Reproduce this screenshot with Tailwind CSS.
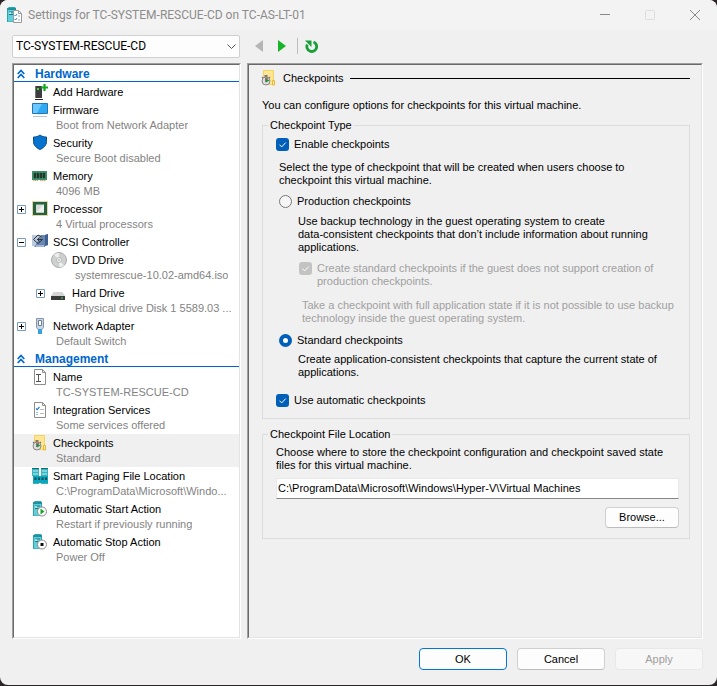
<!DOCTYPE html>
<html lang="en">
<head>
	<meta charset="UTF-8">
	<meta name="viewport" content="width=device-width, initial-scale=1.0">
	<title>Settings for TC-SYSTEM-RESCUE-CD on TC-AS-LT-01</title>
	<script src="https://cdn.jsdelivr.net/npm/@tailwindcss/browser@4"></script>
</head>
<body class="bg-[#2b2528] font-['Liberation_Sans',Arial,sans-serif] text-[11px] leading-[13px] text-black">

	<!-- shared icons -->
	<svg class="hidden">
		<symbol id="check" viewBox="0 0 13 13"><path d="M3.500 6.700l2.200 2.200 4-4.300" fill="none" stroke="#fff"/></symbol>
		<symbol id="collapse" viewBox="0 0 8 10"><path d="M.7 5L4 1.500 7.300 5M.7 9L4 5.500 7.300 9" fill="none" stroke="#0066cc" stroke-width="1.700"/></symbol>
		<symbol id="plus" viewBox="0 0 9 9"><path d="M.5.5h8v8h-8z" fill="#fff" stroke="#7a9ac0"/><path d="M2 4.500h5M4.500 2v5" stroke="#000"/></symbol>
		<symbol id="minus" viewBox="0 0 9 9"><path d="M.5.5h8v8h-8z" fill="#fff" stroke="#7a9ac0"/><path d="M2 4.500h5" stroke="#000"/></symbol>
		<symbol id="checkpoint" viewBox="0 0 16 16">
			<path d="M2 0h11v15H2z" fill="#ffe694"/><path d="M2.500 .5h10v14h-10z" fill="none" stroke="#f5d35e"/>
			<path d="M11.500 10.500h2v4.500h-2z" fill="#ffe694" stroke="#e9b93a"/>
			<path d="M3.500 5h3v2h-3z" fill="#777"/><path d="M1 7l1 1M9 7L8 8" stroke="#777" stroke-width="1.300"/>
			<circle cx="5" cy="11" r="4" fill="#dedede" stroke="#888"/>
			<path d="M4.500 8v4" stroke="#777"/><path d="M5 8.500l3.500 2L5 12.500z" fill="#1c9a38"/><path d="M5 8l2 1" stroke="#d33"/>
		</symbol>
		<symbol id="tower" viewBox="0 0 16 16">
			<path d="M1 1.500L3 0h6l1 1.500V15H1z" fill="#2aa5b2"/><path d="M2 3h7v11.500H2z" fill="#5fd0da"/>
			<path d="M1 2h9" stroke="#147f8b"/><path d="M3 5h5M3 7.500h5" stroke="#167a86"/><path d="M3 6h2" stroke="#fff"/>
		</symbol>
	</svg>

	<div class="flex min-h-[calc(100vh-1px)] flex-col rounded-lg bg-[#f0f0f0]">

		<header class="flex h-[30px] items-center rounded-t-lg bg-[#f3f3f3] pl-[6px]">
			<svg class="h-4 w-4" viewBox="0 0 16 16">
				<use href="#tower"/>
				<path d="M7.500 3.500h5l3 3v9h-8z" fill="#fff" stroke="#999"/><path d="M12.500 3.500v3h3" fill="none" stroke="#999"/>
				<path d="M8.500 8l1 1 1.500-2M8.500 12l1 1 1.500-2" fill="none" stroke="#2784ce"/><path d="M12 9h2M12 13h2" stroke="#aaa"/>
			</svg>
			<h1 class="ml-[6px] flex-1 font-['Roboto',sans-serif] text-xs text-[#8c8c8c]">Settings for TC-SYSTEM-RESCUE-CD on TC-AS-LT-01</h1>
			<button type="button" aria-label="Minimize" class="flex h-full w-[45px] items-center justify-center">
				<svg class="h-[10px] w-[10px]" viewBox="0 0 10 10"><path d="M0 4.500h10" stroke="#888"/></svg>
			</button>
			<button type="button" aria-label="Maximize" disabled class="flex h-full w-[45px] items-center justify-center">
				<svg class="h-[10px] w-[10px]" viewBox="0 0 10 10"><rect x=".5" y=".5" width="9" height="9" rx="1" fill="none" stroke="#ddd"/></svg>
			</button>
			<button type="button" aria-label="Close" class="flex h-full w-[45px] items-center justify-center">
				<svg class="h-[10px] w-[10px]" viewBox="0 0 10 10"><path d="M0 0l10 10M10 0L0 10" stroke="#888"/></svg>
			</button>
		</header>

		<div class="flex h-[33px] items-center pb-[1px] pl-3">
			<div class="relative w-[228px]">
				<select aria-label="Virtual machine" class="block h-[23px] w-full appearance-none rounded-xs border border-[#d0d0d0] bg-[#fdfdfd] pl-[3px] font-['Roboto',sans-serif] text-xs">
					<option>TC-SYSTEM-RESCUE-CD</option>
				</select>
				<svg class="pointer-events-none absolute top-[7px] right-1 h-[9px] w-[9px]" viewBox="0 0 9 9"><path d="M.5 2.500l4 4 4-4" fill="none" stroke="#555"/></svg>
			</div>
			<button type="button" aria-label="Previous" disabled class="ml-[14px]">
				<svg class="h-3 w-3" viewBox="0 0 12 12"><path d="M9 0v12L1 6z" fill="#b5b5b5"/></svg>
			</button>
			<button type="button" aria-label="Next" class="ml-[11px]">
				<svg class="h-3 w-3" viewBox="0 0 12 12"><path d="M1 0v12l8-6z" fill="#18b427"/></svg>
			</button>
			<span class="ml-2 h-4 border-l border-[#bcbcbc]"></span>
			<button type="button" aria-label="Revert" class="ml-[7px]">
				<svg class="h-[13px] w-[13px]" viewBox="0 0 13 13"><path d="M8.500 2a4.900 4.900 0 1 1-6.200 2.500" fill="none" stroke="#189f38" stroke-width="2.800"/><path d="M0 .5h6.500V7z" fill="#189f38"/></svg>
			</button>
		</div>

		<main class="flex flex-1 gap-[6px] pr-[14px] pl-3">

			<nav aria-label="Settings" class="flex w-[229px] shrink-0 border border-t-[#a0a0a0] border-r-white border-b-white border-l-[#a0a0a0]">
				<div class="w-full min-w-0 border border-t-[#696969] border-r-[#e3e3e3] border-b-[#e3e3e3] border-l-[#696969] bg-white">
					<h2 class="flex h-[17px] items-center gap-[10px] border-b border-[#0066cc] pt-[1px] pl-[3px] text-xs font-bold text-[#0066cc]">
						<svg class="h-[10px] w-2"><use href="#collapse"/></svg>Hardware
					</h2>
					<ul class="pt-[1px]">
						<li class="flex pl-[18px]">
							<a href="#" class="flex min-w-0 gap-[5px]">
								<svg class="mt-[1px] h-4 w-4 shrink-0" viewBox="0 0 16 16">
									<path d="M3 2h7v12H3z" fill="#3d3d3d"/><path d="M3 2h1v12H3z" fill="#777"/><path d="M3 15.500h8" stroke="#222"/><path d="M5 4h2v2H5z" fill="#3adf3a"/>
									<path d="M12.500 0v7M9 3.500h7" stroke="#13a81d" stroke-width="2.200"/>
								</svg>
								<span class="leading-[18px]">Add Hardware</span>
							</a>
						</li>
						<li class="flex pl-[18px]">
							<a href="#" class="flex min-w-0 gap-[5px]">
								<svg class="h-4 w-4 shrink-0" viewBox="0 0 16 16">
									<path d="M.5 2.500h15v10H.5z" fill="#2fa9f5" stroke="#2277b0"/><path d="M1 3h9L5 12H1z" fill="#6bc8ff"/><path d="M1 15.500h14" stroke="#b4c4d0"/><path d="M6 13h4v1H6z" fill="#e8eef2"/>
								</svg>
								<span class="min-w-0"><span class="block leading-[18px]">Firmware</span><span class="block truncate pb-[2px] pl-[3px] leading-[13px] text-[#838383]">Boot from Network Adapter</span></span>
							</a>
						</li>
						<li class="flex pl-[18px]">
							<a href="#" class="flex min-w-0 gap-[5px]">
								<svg class="h-4 w-4 shrink-0" viewBox="0 0 16 16">
									<path d="M8 1c2 1.500 4 2 6.500 2v4.500c0 4-3 6.500-6.500 8-3.500-1.500-6.500-4-6.500-8V3C4 3 6 2.500 8 1z" fill="#0673cf" stroke="#0a4d91"/>
								</svg>
								<span class="min-w-0"><span class="block leading-[18px]">Security</span><span class="block truncate pb-[2px] pl-[3px] leading-[13px] text-[#838383]">Secure Boot disabled</span></span>
							</a>
						</li>
						<li class="flex pl-[18px]">
							<a href="#" class="flex min-w-0 gap-[5px]">
								<svg class="h-4 w-4 shrink-0" viewBox="0 0 16 16">
									<path d="M0 4h15v9H0z" fill="#3f9068"/><path d="M2 6h2v5H2zM5 6h2v5H5zM8 6h2v5H8zM11 6h2v5h-2z" fill="#26332d" stroke="#1d4634" stroke-width=".5"/><path d="M1 13.500h5M8 13.500h6" stroke="#e0a070" stroke-dasharray="1.500 .5"/>
								</svg>
								<span class="min-w-0"><span class="block leading-[18px]">Memory</span><span class="block truncate pb-[2px] pl-[3px] leading-[13px] text-[#838383]">4096 MB</span></span>
							</a>
						</li>
						<li class="flex pl-[3px]">
							<button type="button" aria-label="Expand Processor" class="mr-[6px] flex h-[18px] items-center"><svg class="h-[9px] w-[9px]"><use href="#plus"/></svg></button>
							<a href="#" class="flex min-w-0 gap-[5px]">
								<svg class="h-4 w-4 shrink-0" viewBox="0 0 16 16">
									<rect x=".5" y="1.500" width="15" height="14" fill="none" stroke="#c9a94c" stroke-dasharray="1 1"/><path d="M1 2h14v13H1z" fill="#24613f"/><path d="M4 4.500h8v8H4z" fill="#d8dcd9"/><path d="M4 12.500l8-8v8z" fill="#eef0ee"/>
								</svg>
								<span class="min-w-0"><span class="block leading-[18px]">Processor</span><span class="block truncate pb-[2px] pl-[3px] leading-[13px] text-[#838383]">4 Virtual processors</span></span>
							</a>
						</li>
						<li>
							<div class="flex pl-[3px]">
								<button type="button" aria-label="Collapse SCSI Controller" class="mr-[6px] flex h-[18px] items-center"><svg class="h-[9px] w-[9px]"><use href="#minus"/></svg></button>
								<a href="#" class="flex min-w-0 gap-[5px]">
									<svg class="h-4 w-4 shrink-0" viewBox="0 0 16 16">
										<path d="M0 2h13l3-1v11l-3 1v1H3l-1-1H0z" fill="#6787b3"/><path d="M0 2h9L3 13H0z" fill="#b9c9df"/><path d="M13 2l3-1v11l-3 1z" fill="#415f8e"/>
										<path d="M9.500 4L6 2 1.500 6.500 6 10.500l4.500-4H5M7.500 4.500l-2 2 2 2" fill="none" stroke="#333"/><path d="M4 13h8" stroke="#dce6f2"/>
									</svg>
									<span class="leading-[18px]">SCSI Controller</span>
								</a>
							</div>
							<ul>
								<li class="flex pl-[37px]">
									<a href="#" class="flex min-w-0 gap-[5px]">
										<svg class="mt-[1px] h-4 w-4 shrink-0" viewBox="0 0 16 16">
											<circle cx="8" cy="8" r="7.500" fill="#cdd0cf" stroke="#a9acab"/><path d="M8 8L3 2.500A7 7 0 0 1 8 1zM8 8l5 5.500A7 7 0 0 1 8 15z" fill="#eceeed"/><circle cx="8" cy="8" r="2.500" fill="#f3f4f4" stroke="#a9b0ae" stroke-width=".8"/><circle cx="8" cy="8" r="1" fill="#bbb"/>
										</svg>
										<span class="min-w-0"><span class="block leading-[18px]">DVD Drive</span><span class="block truncate pb-[2px] pl-[3px] leading-[13px] text-[#838383]">systemrescue-10.02-amd64.iso</span></span>
									</a>
								</li>
								<li class="flex pl-[22px]">
									<button type="button" aria-label="Expand Hard Drive" class="mr-[6px] flex h-[18px] shrink-0 items-center"><svg class="h-[9px] w-[9px]"><use href="#plus"/></svg></button>
									<a href="#" class="flex min-w-0 gap-[5px]">
										<svg class="mt-[1px] h-4 w-4 shrink-0" viewBox="0 0 16 16">
											<path d="M2.500 7h9l2.500 4H0z" fill="#d5d5d5"/><path d="M0 11h14v4H0z" fill="#3b3b3b"/><path d="M10 12.500h2v1h-2z" fill="#3de05a"/>
										</svg>
										<span class="min-w-0"><span class="block leading-[18px]">Hard Drive</span><span class="block truncate pb-[2px] pl-[3px] leading-[13px] text-[#838383]">Physical drive Disk 1 5589.03 ...</span></span>
									</a>
								</li>
							</ul>
						</li>
						<li class="flex pl-[3px]">
							<button type="button" aria-label="Expand Network Adapter" class="mr-[6px] flex h-[18px] items-center"><svg class="h-[9px] w-[9px]"><use href="#plus"/></svg></button>
							<a href="#" class="flex min-w-0 gap-[5px]">
								<svg class="mt-[1px] h-4 w-4 shrink-0" viewBox="0 0 16 16">
									<path d="M4.500 .5h7v9l-1.500 2H6l-1.500-2z" fill="#c9d5e2" stroke="#8397ad"/><path d="M6.500 2.500h3v5h-3z" fill="#fff" stroke="#6d8094"/><path d="M6 11h4v5H6z" fill="#35a3dd"/>
								</svg>
								<span class="min-w-0"><span class="block leading-[18px]">Network Adapter</span><span class="block truncate pb-[2px] pl-[3px] leading-[13px] text-[#838383]">Default Switch</span></span>
							</a>
						</li>
					</ul>
					<h2 class="flex h-[17px] items-center gap-[10px] border-b border-[#0066cc] pt-[1px] pl-[3px] text-xs font-bold text-[#0066cc]">
						<svg class="h-[10px] w-2"><use href="#collapse"/></svg>Management
					</h2>
					<ul class="pt-[1px]">
						<li class="flex pl-[18px]">
							<a href="#" class="flex min-w-0 gap-[5px]">
								<svg class="mt-[1px] h-4 w-4 shrink-0" viewBox="0 0 16 16">
									<path d="M2.500 .5h8l3 3v12h-11z" fill="#fff" stroke="#8d8d8d"/><path d="M10.500 .5v3h3" fill="none" stroke="#8d8d8d"/><path d="M4 5.500h5M4 12.500h5M6.500 5.500v7" stroke="#555"/>
								</svg>
								<span class="min-w-0"><span class="block leading-[18px]">Name</span><span class="block truncate pb-[2px] pl-[3px] leading-[13px] text-[#838383]">TC-SYSTEM-RESCUE-CD</span></span>
							</a>
						</li>
						<li class="flex pl-[18px]">
							<a href="#" class="flex min-w-0 gap-[5px]">
								<svg class="mt-[1px] h-4 w-4 shrink-0" viewBox="0 0 16 16">
									<path d="M2.500 .5h8l3 3v12h-11z" fill="#fff" stroke="#8d8d8d"/><path d="M10.500 .5v3h3" fill="none" stroke="#8d8d8d"/><path d="M4 6.500l1.200 1.200L7.500 5" fill="none" stroke="#2784ce" stroke-width="1.200"/><path d="M4 10.500h2M4 12.500h2" stroke="#9cc0de"/><path d="M8 7.500h4M8 11.500h4" stroke="#bbb"/>
								</svg>
								<span class="min-w-0"><span class="block leading-[18px]">Integration Services</span><span class="block truncate pb-[2px] pl-[3px] leading-[13px] text-[#838383]">Some services offered</span></span>
							</a>
						</li>
						<li class="flex bg-[#f0f0f0] pl-[18px]">
							<a href="#" aria-current="page" class="flex min-w-0 gap-[5px]">
								<svg class="mt-[1px] h-4 w-4 shrink-0"><use href="#checkpoint"/></svg>
								<span class="min-w-0"><span class="block leading-[18px]">Checkpoints</span><span class="block truncate pb-[2px] pl-[3px] leading-[13px] text-[#838383]">Standard</span></span>
							</a>
						</li>
						<li class="flex pl-[18px]">
							<a href="#" class="flex min-w-0 gap-[5px]">
								<svg class="mt-[1px] h-4 w-4 shrink-0" viewBox="0 0 16 16">
									<path d="M0 0h7v8H0zM9 0h7v8H9z" fill="#36b4c0"/><path d="M0 .5h7M9 .5h7" stroke="#0d6f7b"/><path d="M1 3h5M10 3h5M1 6h5M10 6h5" stroke="#c7f1f5"/>
									<path d="M1 8h15v7H1z" fill="#0ba7bf"/><path d="M2.500 9.500h2v2.500h-2zM6 9.500h2v2.500H6zM9.500 9.500h2v2.500h-2zM13 9.500h2v2.500h-2z" fill="#04505e"/><path d="M1 15.500h6M9 15.500h7" stroke="#36b4c0"/>
								</svg>
								<span class="min-w-0"><span class="block leading-[18px]">Smart Paging File Location</span><span class="block truncate pb-[2px] pl-[3px] leading-[13px] text-[#838383]">C:\ProgramData\Microsoft\Windo...</span></span>
							</a>
						</li>
						<li class="flex pl-[18px]">
							<a href="#" class="flex min-w-0 gap-[5px]">
								<svg class="mt-[1px] h-4 w-4 shrink-0" viewBox="0 0 16 16">
									<use href="#tower"/><circle cx="10" cy="10.500" r="4.500" fill="#fff" stroke="#8a8a8a"/><path d="M8.500 7.500v6l4-3z" fill="#18a52c"/>
								</svg>
								<span class="min-w-0"><span class="block leading-[18px]">Automatic Start Action</span><span class="block truncate pb-[2px] pl-[3px] leading-[13px] text-[#838383]">Restart if previously running</span></span>
							</a>
						</li>
						<li class="flex pl-[18px]">
							<a href="#" class="flex min-w-0 gap-[5px]">
								<svg class="mt-[1px] h-4 w-4 shrink-0" viewBox="0 0 16 16">
									<use href="#tower"/><circle cx="10" cy="10.500" r="4.500" fill="#fff" stroke="#8a8a8a"/><path d="M8.500 9h3v3h-3z" fill="#111"/>
								</svg>
								<span class="min-w-0"><span class="block leading-[18px]">Automatic Stop Action</span><span class="block truncate pb-[2px] pl-[3px] leading-[13px] text-[#838383]">Power Off</span></span>
							</a>
						</li>
					</ul>
				</div>
			</nav>

			<section class="flex min-w-0 flex-1 border border-t-[#a0a0a0] border-r-white border-b-white border-l-[#a0a0a0]">
				<div class="w-full min-w-0 border border-t-[#696969] border-r-[#e3e3e3] border-b-[#e3e3e3] border-l-[#696969] pt-[5px] pr-[11px] pl-[13px]">
					<div class="flex h-4 items-center">
						<svg class="-ml-[1px] h-4 w-4"><use href="#checkpoint"/></svg>
						<h2 class="ml-[6px]">Checkpoints</h2>
						<span class="ml-[6px] flex-1 border-t border-black"></span>
					</div>
					<p class="mt-[13px]">You can configure options for checkpoints for this virtual machine.</p>

					<fieldset class="mt-[7px] border border-[#dcdcdc] pr-[10px] pb-[11px] pl-[13px]">
						<legend class="-ml-[8px] px-[2px]">Checkpoint Type</legend>
						<div class="mt-[6px] flex gap-[5px]">
							<span class="relative h-[13px] w-[13px]">
								<input id="enable" type="checkbox" checked class="block h-[13px] w-[13px] appearance-none rounded-[3px] bg-[#005fb8]">
								<svg class="pointer-events-none absolute inset-0 h-[13px] w-[13px]"><use href="#check"/></svg>
							</span>
							<label for="enable">Enable checkpoints</label>
						</div>
						<p class="mt-[10px] ml-[3px]">Select the type of checkpoint that will be created when users choose to<br>checkpoint this virtual machine.</p>
						<div class="mt-[8px] ml-[3px] flex gap-[5px]">
							<input id="production" name="type" type="radio" class="h-[13px] w-[13px] appearance-none rounded-full border border-[#777] bg-[#f6f6f6]">
							<label for="production">Production checkpoints</label>
						</div>
						<p class="mt-[7px] ml-[22px]">Use backup technology in the guest operating system to create<br>data-consistent checkpoints that don’t include information about running<br>applications.</p>
						<div class="mt-[8px] ml-[23px] flex gap-[5px] text-[#a0a0a0]">
							<span class="relative h-[13px] w-[13px] shrink-0">
								<input id="fallback" type="checkbox" checked disabled class="block h-[13px] w-[13px] appearance-none rounded-[3px] bg-[#c3c3c3]">
								<svg class="pointer-events-none absolute inset-0 h-[13px] w-[13px]"><use href="#check"/></svg>
							</span>
							<label for="fallback">Create standard checkpoints if the guest does not support creation of<br>production checkpoints.</label>
						</div>
						<p class="mt-[11px] ml-[26px] text-[#a0a0a0]">Take a checkpoint with full application state if it is not possible to use backup<br>technology inside the guest operating system.</p>
						<div class="mt-[9px] ml-[3px] flex gap-[5px]">
							<input id="standard" name="type" type="radio" checked class="h-[13px] w-[13px] appearance-none rounded-full border-4 border-[#005fb8] bg-white">
							<label for="standard">Standard checkpoints</label>
						</div>
						<p class="mt-[6px] ml-[22px]">Create application-consistent checkpoints that capture the current state of<br>applications.</p>
						<div class="mt-[15px] flex gap-[5px]">
							<span class="relative h-[13px] w-[13px]">
								<input id="automatic" type="checkbox" checked class="block h-[13px] w-[13px] appearance-none rounded-[3px] bg-[#005fb8]">
								<svg class="pointer-events-none absolute inset-0 h-[13px] w-[13px]"><use href="#check"/></svg>
							</span>
							<label for="automatic">Use automatic checkpoints</label>
						</div>
					</fieldset>

					<fieldset class="mt-[9px] border border-[#dcdcdc] pr-[10px] pb-[10px] pl-[13px]">
						<legend class="-ml-[8px] px-[2px]">Checkpoint File Location</legend>
						<label for="location" class="mt-[5px] block">Choose where to store the checkpoint configuration and checkpoint saved state<br>files for this virtual machine.</label>
						<input id="location" type="text" value="C:\ProgramData\Microsoft\Windows\Hyper-V\Virtual Machines" class="mt-[6px] block h-[21px] w-full border border-[#e8e8e8] border-b-[#868686] bg-white px-[1px] pb-[1px]">
						<div class="mt-2 flex justify-end">
							<button type="button" class="h-[21px] w-[74px] rounded border border-[#d0d0d0] border-b-[#bcbcbc] bg-[#fdfdfd]">Browse...</button>
						</div>
					</fieldset>
				</div>
			</section>
		</main>

		<footer class="flex justify-end gap-[10px] pt-[9px] pr-[14px] pb-[15px]">
			<button type="button" class="h-[22px] w-[88px] rounded border border-[#0078d4] bg-[#fdfdfd]">OK</button>
			<button type="button" class="h-[22px] w-[88px] rounded border border-[#d0d0d0] border-b-[#bcbcbc] bg-[#fdfdfd]">Cancel</button>
			<button type="button" disabled class="h-[22px] w-[88px] rounded border border-[#e8e8e8] bg-[#f7f7f7] text-[#a0a0a0]">Apply</button>
		</footer>
	</div>

</body>
</html>
